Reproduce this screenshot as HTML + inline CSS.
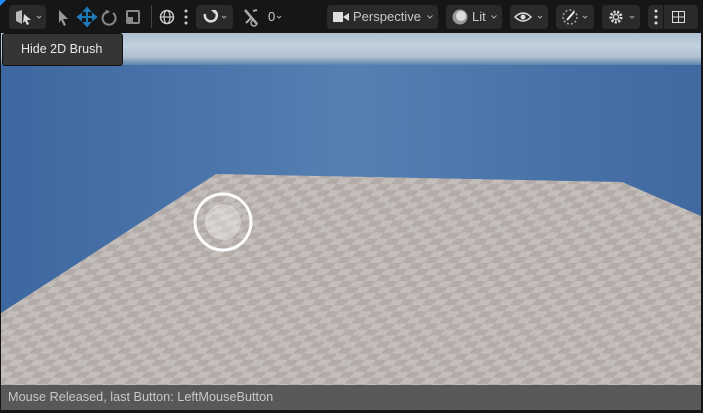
<!DOCTYPE html>
<html><head><style>
*{margin:0;padding:0;box-sizing:border-box}
body{width:703px;height:413px;overflow:hidden;background:#151515;font-family:"Liberation Sans",sans-serif;position:relative}
.tb{position:absolute;left:0;top:0;width:703px;height:33px;background:#161616}
.btn{position:absolute;top:5px;height:24px;background:#2a2a2a;border-radius:4px;color:#c8c8c8;font-size:13px;line-height:24px}
.cv{position:absolute;top:10px}
.vp{position:absolute;left:1px;top:33px;width:700px;height:377px;background:linear-gradient(90deg,#3d67a0 0%,#5580b2 50%,#3f69a0 100%);overflow:hidden}
.cl{position:absolute;left:0;top:0;width:100%;height:32px;background:linear-gradient(180deg,#aebfd0 0%,#c3d1de 40%,#b0c0d2 75%,#5d82ad 100%)}
.status{position:absolute;left:1px;top:385px;width:700px;height:25px;background:rgba(80,80,80,.92);color:#c8c8c8;font-size:12.7px;line-height:25px;padding-left:7px}
.tip{position:absolute;left:2px;top:33px;width:121px;height:33px;background:#353535;border:1px solid #111;border-radius:3px;color:#e8e8e8;font-size:12.5px;line-height:31px;padding-left:18px}
</style></head><body>
<div class="tb">
 <div style="position:absolute;left:0;top:0;width:0;height:0;border-top:6px solid #1e8cff;border-right:6px solid transparent"></div>
 <div class="btn" style="left:9px;width:37px"><svg width="37" height="24"><path d="M7 7l6-2v14l-6-3z" fill="#bbb"/><path d="M15 9l7 6h-4l2 4-2 1-2-4-2 2z" fill="#ddd"/><path d="M28 11l2 2 2-2" stroke="#aaa" fill="none"/></svg></div>
 <svg style="position:absolute;left:55px;top:5px" width="95" height="24">
  <path d="M4 5l9 9h-5l3 6-2 1-3-6-2 3z" fill="#999"/>
  <g stroke="#1e7ab8" stroke-width="2" fill="#1e7ab8"><path d="M32 5v14M25 12h14"/><path d="M29.5 6l2.5-3 2.5 3zM29.5 18l2.5 3 2.5-3zM26 9.5l-3 2.5 3 2.5zM38 9.5l3 2.5-3 2.5z"/></g>
  <path d="M52 7a6.5 6.5 0 1 0 6 1" stroke="#888" stroke-width="2" fill="none"/><path d="M50 5l5 1-3 3z" fill="#888"/>
  <rect x="72" y="6" width="12" height="12" stroke="#888" stroke-width="2" fill="none" rx="1"/><rect x="72" y="12" width="6" height="6" fill="#888"/>
 </svg>
 <div style="position:absolute;left:151px;top:5px;width:1px;height:23px;background:#444"></div>
 <svg style="position:absolute;left:158px;top:5px" width="32" height="24"><circle cx="9" cy="12" r="6.5" stroke="#ccc" stroke-width="1.5" fill="none"/><ellipse cx="9" cy="12" rx="3" ry="6.5" stroke="#ccc" stroke-width="1.2" fill="none"/><path d="M2.5 12h13" stroke="#ccc" stroke-width="1.2"/><circle cx="28" cy="6" r="1.5" fill="#ccc"/><circle cx="28" cy="12" r="1.5" fill="#ccc"/><circle cx="28" cy="18" r="1.5" fill="#ccc"/></svg>
 <div class="btn" style="left:196px;width:37px"><svg width="37" height="24"><path d="M9 9a6 6 0 1 0 10-3" stroke="#ddd" stroke-width="2.5" fill="none"/><path d="M15 5l5 0-1 4z" fill="#ddd"/><path d="M26 11l2 2 2-2" stroke="#aaa" fill="none"/></svg></div>
 <svg style="position:absolute;left:242px;top:5px" width="45" height="24"><path d="M3 5l12 14" stroke="#aaa" stroke-width="2.5"/><path d="M4 18l5-5M11 6l4-1" stroke="#aaa" stroke-width="2"/><path d="M12 15a3 3 0 1 0 3 3" stroke="#aaa" stroke-width="1.5" fill="none"/><text x="26" y="16" fill="#ccc" font-size="13" font-family="Liberation Sans">0</text><path d="M35 11l2 2 2-2" stroke="#aaa" fill="none"/></svg>
 <div class="btn" style="left:327px;width:111px"><svg style="position:absolute;left:6px;top:6px" width="16" height="12"><rect x="0" y="1" width="10" height="10" fill="#ddd"/><path d="M10 6l6-4v8z" fill="#ddd"/></svg><span style="position:absolute;left:26px">Perspective</span><svg class="cv" style="left:100px" width="6" height="4"><path d="M0.5 0.5l2.5 2.5 2.5-2.5" stroke="#aaa" fill="none"/></svg></div>
 <div class="btn" style="left:446px;width:56px"><svg style="position:absolute;left:6px;top:4px" width="16" height="16"><circle cx="8" cy="8" r="7.5" fill="#999"/><circle cx="9" cy="7" r="5" fill="#ddd"/></svg><span style="position:absolute;left:26px">Lit</span><svg class="cv" style="left:45px" width="6" height="4"><path d="M0.5 0.5l2.5 2.5 2.5-2.5" stroke="#aaa" fill="none"/></svg></div>
 <div class="btn" style="left:510px;width:38px"><svg width="38" height="24"><path d="M5 12q8-8 16 0q-8 8-16 0z" stroke="#ddd" stroke-width="1.5" fill="none"/><circle cx="13" cy="12" r="2.5" fill="#ddd"/><path d="M28 11l2 2 2-2" stroke="#aaa" fill="none"/></svg></div>
 <div class="btn" style="left:556px;width:38px"><svg width="38" height="24"><circle cx="14" cy="12" r="7" stroke="#aaa" stroke-width="1.5" stroke-dasharray="2 2" fill="none"/><path d="M11 15l7-8" stroke="#eee" stroke-width="2"/><path d="M27 11l2 2 2-2" stroke="#aaa" fill="none"/></svg></div>
 <div class="btn" style="left:602px;width:38px"><svg width="38" height="24"><circle cx="14" cy="12" r="5" stroke="#ddd" stroke-width="3" stroke-dasharray="2 1.5" fill="none"/><circle cx="14" cy="12" r="2.5" stroke="#ddd" stroke-width="1.2" fill="none"/><path d="M28 11l2 2 2-2" stroke="#aaa" fill="none"/></svg></div>
 <div class="btn" style="left:648px;width:50px"><svg width="50" height="24"><circle cx="8" cy="6" r="1.5" fill="#ddd"/><circle cx="8" cy="12" r="1.5" fill="#ddd"/><circle cx="8" cy="18" r="1.5" fill="#ddd"/><rect x="15" y="0" width="1" height="24" fill="#161616"/><rect x="24.5" y="6.5" width="12" height="11" stroke="#ddd" fill="none"/><path d="M30.5 6.5v11M24.5 12h12" stroke="#ddd"/></svg></div>
</div>
<div class="vp">
 <div class="cl"></div>
 <svg style="position:absolute;left:0;top:0" width="700" height="377">
  <defs><pattern id="ch" width="22" height="22" patternUnits="userSpaceOnUse" patternTransform="skewX(-40) scale(1,0.55)"><rect width="22" height="22" fill="#b2aba8"/><rect width="11" height="11" fill="#c4beba"/><rect x="11" y="11" width="11" height="11" fill="#c4beba"/></pattern></defs>
  <polygon points="215,141 621,149 700,183 700,377 0,377 0,280" fill="url(#ch)"/>
  <circle cx="222" cy="189" r="28" stroke="#fff" stroke-width="3" fill="none" opacity=".95"/>
  <circle cx="222" cy="189" r="18" fill="#fff" opacity=".35"/>
 </svg>
</div>
<div class="status">Mouse Released, last Button: LeftMouseButton</div>
<div class="tip">Hide 2D Brush</div>
</body></html>
